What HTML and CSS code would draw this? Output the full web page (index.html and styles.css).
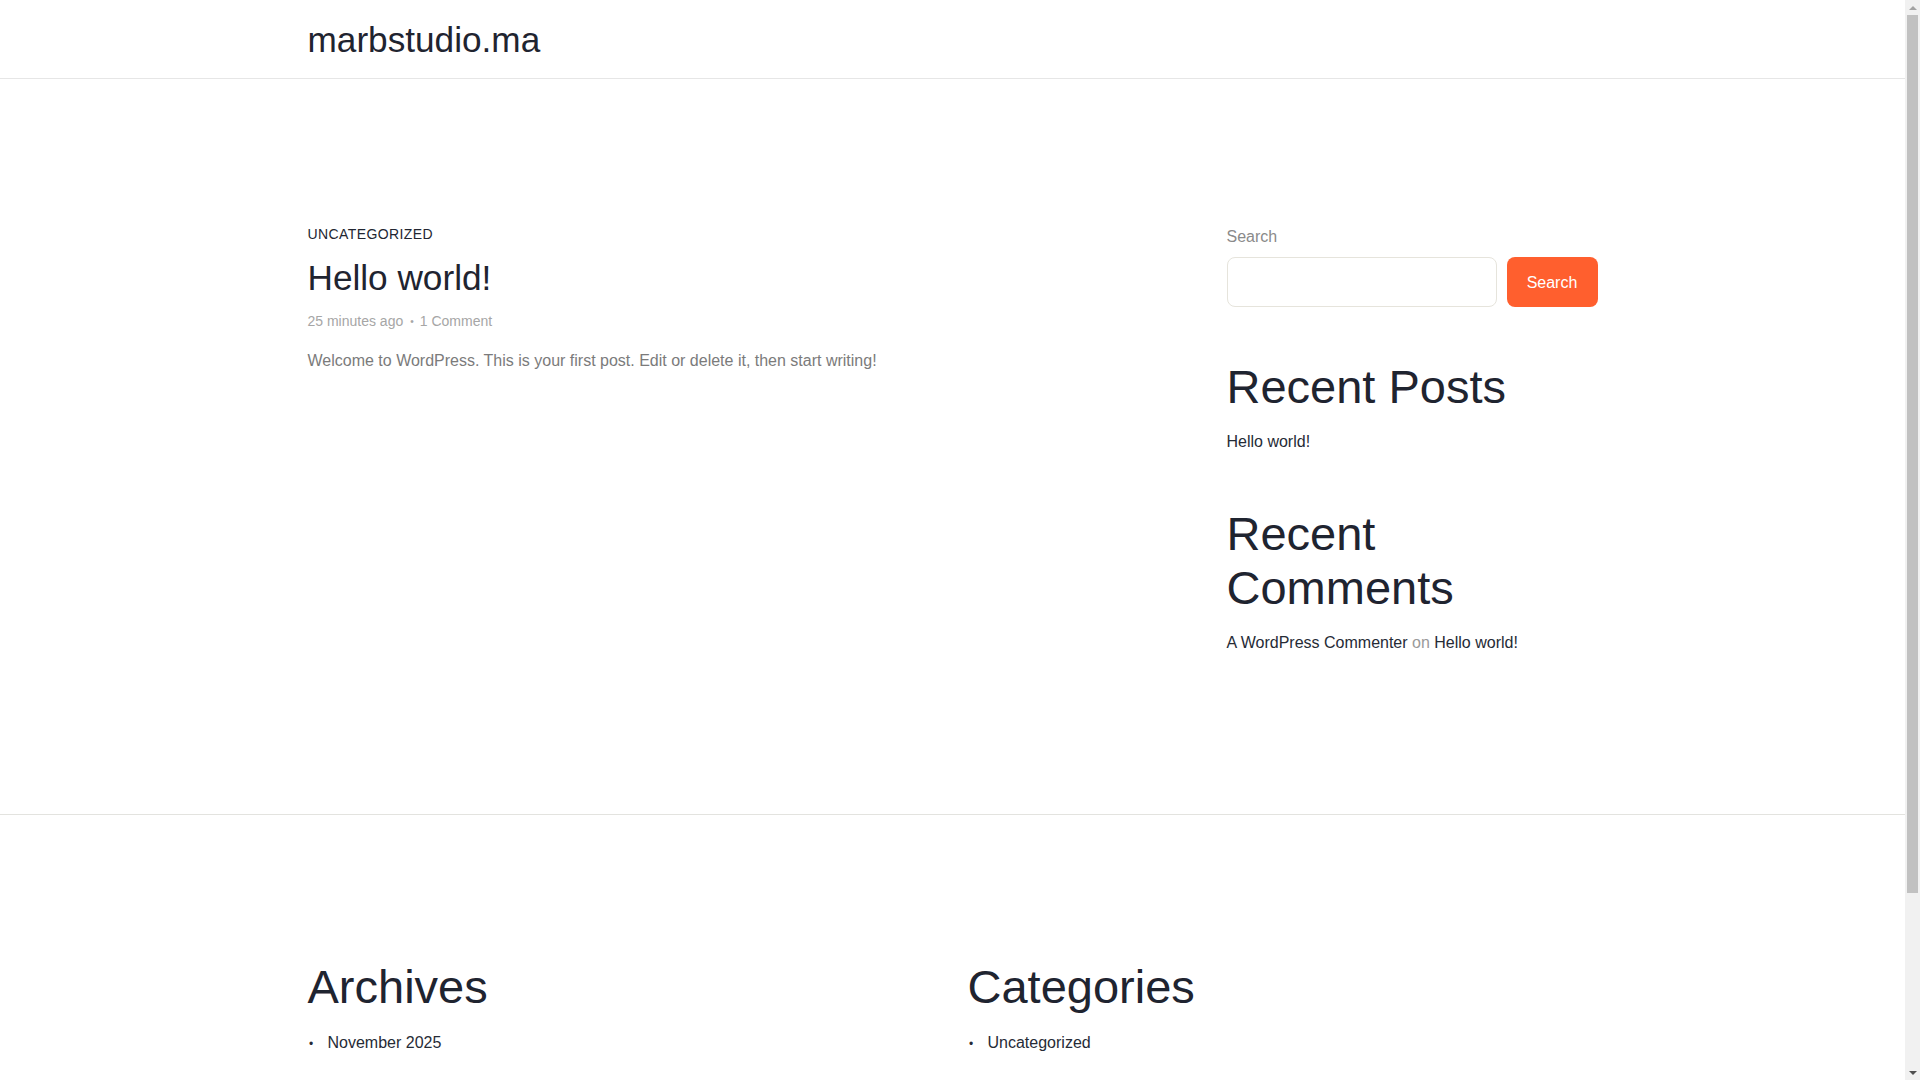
FILE: index.html
```html
<!DOCTYPE html>
<html lang="en">
<head>
<meta charset="utf-8">
<title>marbstudio.ma</title>
<link rel="stylesheet" href="styles.css">
</head>
<body>
<header class="site-header">
  <div class="container">
    <a class="site-title" href="#">marbstudio.ma</a>
  </div>
</header>

<main class="site-main">
  <div class="container layout">
    <div class="content">
      <article class="post">
        <div class="post-cat"><a href="#">UNCATEGORIZED</a></div>
        <h1 class="post-title"><a href="#">Hello world!</a></h1>
        <div class="post-meta">
          <span>25 minutes ago</span><span class="sep">•</span><a href="#">1 Comment</a>
        </div>
        <p class="post-excerpt">Welcome to WordPress. This is your first post. Edit or delete it, then start writing!</p>
      </article>
    </div>

    <aside class="sidebar">
      <section class="widget widget-search">
        <label class="search-label" for="s">Search</label>
        <form class="search-form">
          <input class="search-input" id="s" type="search">
          <button class="search-btn" type="button">Search</button>
        </form>
      </section>

      <section class="widget">
        <h2 class="widget-title">Recent Posts</h2>
        <ul class="widget-list">
          <li><a href="#">Hello world!</a></li>
        </ul>
      </section>

      <section class="widget">
        <h2 class="widget-title">Recent Comments</h2>
        <ul class="widget-list">
          <li><a href="#">A WordPress Commenter</a> <span class="muted">on</span> <a href="#">Hello world!</a></li>
        </ul>
      </section>
    </aside>
  </div>
</main>

<footer class="site-footer">
  <div class="container footer-grid">
    <section class="widget">
      <h2 class="widget-title">Archives</h2>
      <ul class="footer-list">
        <li><a href="#">November 2025</a></li>
      </ul>
    </section>
    <section class="widget">
      <h2 class="widget-title">Categories</h2>
      <ul class="footer-list">
        <li><a href="#">Uncategorized</a></li>
      </ul>
    </section>
  </div>
</footer>

<div class="scrollbar" aria-hidden="true">
  <span class="sb-arrow sb-up"></span>
  <span class="sb-track"><span class="sb-thumb"></span></span>
  <span class="sb-arrow sb-down"></span>
</div>
</body>
</html>
```

FILE: styles.css
```css
html, body {
  margin: 0;
  padding: 0;
  background: #ffffff;
}

body {
  font-family: "Liberation Sans", Arial, sans-serif;
  font-size: 16px;
  line-height: 1.5;
  color: #1f2430;
  padding-right: 15px;
}

a {
  color: inherit;
  text-decoration: none;
}

.container {
  max-width: 1290px;
  margin: 0 auto;
}

/* Header */
.site-header {
  border-bottom: 1px solid #e6e6e6;
  padding: 19.6px 0 18px;
}

.site-title {
  display: block;
  font-size: 35.2px;
  line-height: 40.4px;
  color: #1f2430;
}

/* Main */
.site-main {
  padding: 145px 0 159px;
  border-bottom: 1px solid #e3e3df;
}

.layout {
  display: grid;
  grid-template-columns: 1fr 371px;
}

.post-cat {
  font-size: 14px;
  line-height: 21px;
  letter-spacing: 0.4px;
  color: #222631;
}

.post-title {
  margin: 12px 0 0;
  font-size: 35.2px;
  line-height: 42.24px;
  font-weight: normal;
  color: #1f2430;
}

.post-meta {
  margin-top: 12px;
  font-size: 14px;
  line-height: 21px;
  color: #a6a6a6;
}

.post-meta .sep {
  margin: 0 6px 0 7px;
  font-size: 10px;
  position: relative;
  top: -1px;
}

.post-excerpt {
  margin: 16px 0 0;
  color: #7b7b7b;
}

/* Sidebar */
.sidebar {
  display: flex;
  flex-direction: column;
  gap: 53px;
}

.search-label {
  display: block;
  color: #8a8a8a;
  margin: 1.2px 0 8px;
}

.search-form {
  display: flex;
  gap: 10px;
  margin: 0;
}

.search-input {
  flex: 1;
  min-width: 0;
  height: 50px;
  box-sizing: border-box;
  border: 1px solid #e6e4dc;
  border-radius: 8px;
  background: #fff;
  padding: 0 12px;
  font: inherit;
  outline: none;
}

.search-btn {
  width: 91px;
  height: 50px;
  border: 0;
  border-radius: 8px;
  background: #ff5f2e;
  color: #ffffff;
  font-family: "Liberation Sans", Arial, sans-serif;
  font-size: 16px;
  line-height: 1;
  padding: 2px 0 0;
  cursor: pointer;
}

.widget-title {
  margin: 0 0 16.5px;
  font-size: 47px;
  line-height: 1.14;
  font-weight: normal;
  color: #1f2430;
}

.widget-list {
  list-style: none;
  margin: 0;
  padding: 0;
  color: #262b36;
}

.muted {
  color: #9a9a9a;
}

/* Footer */
.site-footer {
  padding: 145px 0 236px;
}

.footer-grid {
  display: grid;
  grid-template-columns: 1fr 1fr;
  gap: 30px;
}

.footer-list {
  margin: 0;
  padding-left: 20px;
  list-style: none;
  color: #262b36;
}

.footer-list li {
  padding-top: 1px;
}

.footer-list li::before {
  content: "•";
  display: inline-block;
  box-sizing: border-box;
  width: 20px;
  margin-left: -20px;
  padding-left: 1.5px;
  font-size: 12px;
}

/* Browser scrollbar as in the screenshot */
.scrollbar {
  position: fixed;
  top: 0;
  right: 0;
  width: 15px;
  height: 100vh;
  background: #f1f1f1;
  display: flex;
  flex-direction: column;
}

.sb-arrow {
  height: 15px;
  flex: none;
  display: flex;
  align-items: center;
  justify-content: center;
}

.sb-up::before,
.sb-down::before {
  content: "";
  width: 0;
  height: 0;
  border-left: 4px solid transparent;
  border-right: 4px solid transparent;
}

.sb-up::before {
  border-bottom: 4px solid #a3a3a3;
}

.sb-down::before {
  border-top: 4px solid #505050;
}

.sb-track {
  flex: 1;
  padding: 0 2px;
}

.sb-thumb {
  display: block;
  height: 878px;
  background: #c1c1c1;
}
```
